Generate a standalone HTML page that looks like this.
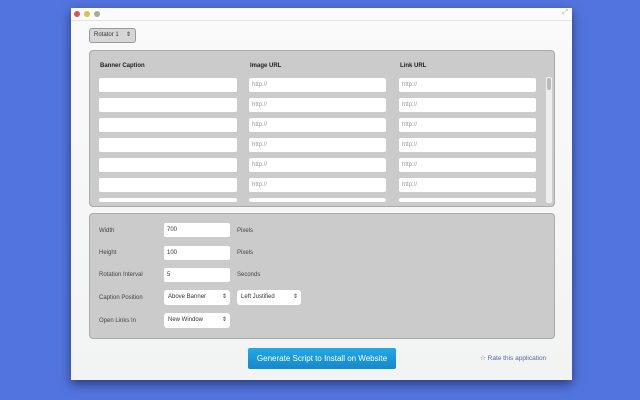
<html><head><style>
body{margin:0;width:640px;height:400px;background:#5274de;font-family:"Liberation Sans",sans-serif;position:relative;overflow:hidden}
.win{position:absolute;left:71px;top:8px;width:501px;height:372px;background:linear-gradient(#fafafa,#f2f3f3);box-shadow:0 4px 10px rgba(0,0,30,.5)}
.tb{position:absolute;left:0;top:0;width:501px;height:12px;border-bottom:1px solid #e4e4e4;background:#fbfbfb}
.dot{position:absolute;top:3px;width:6px;height:6px;border-radius:50%}
.a{position:absolute}
.panel{position:absolute;background:#cbcbcb;border:1px solid #aaa;border-radius:4px}
.in{position:absolute;background:#fff;height:14px;border-radius:2px;font-size:6px;color:#999;line-height:14px;text-indent:3px}
.lab{position:absolute;font-size:6px;color:#444}
.h{position:absolute;font-size:6px;font-weight:bold;color:#222}
.sel{position:absolute;background:#fff;height:15px;border-radius:3px;font-size:6px;color:#333;line-height:15px;text-indent:4px}
.sel:after{content:"⇕";position:absolute;right:3px;top:0;font-size:6px}
</style></head><body>
<div class="win">
<div class="tb"><div class="dot" style="left:3px;background:#e05050"></div><div class="dot" style="left:13px;background:#e0c040"></div><div class="dot" style="left:23px;background:#a0b090"></div><div class="a" style="right:4px;top:1px;font-size:7px;color:#aaa">⤢</div></div>
<div class="a" style="left:18px;top:20px;width:45px;height:13px;background:#d6d6d6;border:1px solid #999;border-radius:3px;font-size:6px;line-height:13px;text-indent:4px;color:#333">Rotator 1<span style="position:absolute;right:4px">⇕</span></div>
<div class="panel" style="left:18px;top:42px;width:464px;height:155px"></div>
<div class="panel" style="left:18px;top:205px;width:464px;height:124px"></div>
<div class="h" style="left:29px;top:55px">Banner Caption</div>
<div class="h" style="left:179px;top:55px">Image URL</div>
<div class="h" style="left:329px;top:55px">Link URL</div>
<div class="a" style="left:475px;top:69px;width:6px;height:126px;background:#eee;border-radius:2px"><div style="margin:1px;height:12px;background:#bbb;border-radius:2px"></div></div>
<div id="rows"></div>
<div class="lab" style="left:28px;top:220px">Width</div><div class="in" style="left:93px;top:215px;width:66px;color:#333">700</div><div class="lab" style="left:166px;top:220px">Pixels</div>
<div class="lab" style="left:28px;top:242px">Height</div><div class="in" style="left:93px;top:238px;width:66px;color:#333">100</div><div class="lab" style="left:166px;top:242px">Pixels</div>
<div class="lab" style="left:28px;top:264px">Rotation Interval</div><div class="in" style="left:93px;top:260px;width:66px;color:#333">5</div><div class="lab" style="left:166px;top:264px">Seconds</div>
<div class="lab" style="left:28px;top:287px">Caption Position</div><div class="sel" style="left:93px;top:282px;width:66px">Above Banner</div><div class="sel" style="left:166px;top:282px;width:64px">Left Justified</div>
<div class="lab" style="left:28px;top:310px">Open Links In</div><div class="sel" style="left:93px;top:305px;width:66px">New Window</div>
<div class="a" style="left:177px;top:340px;width:148px;height:21px;background:linear-gradient(#22a8e8,#1488cc);border-radius:2px;color:#fff;font-size:8px;line-height:21px;text-align:center">Generate Script to Install on Website</div>
<div class="a" style="left:409px;top:346px;font-size:6.5px;color:#5565a8">☆ Rate this application</div>
</div>
<script>
var h='';[70,90,110,130,150,170,190].forEach(function(y,i){var hh=i==6?4:14;
h+='<div class="in" style="left:28px;top:'+y+'px;width:138px;height:'+hh+'px"></div><div class="in" style="left:178px;top:'+y+'px;width:137px;height:'+hh+'px">'+(i<6?'http://':'')+'</div><div class="in" style="left:328px;top:'+y+'px;width:137px;height:'+hh+'px">'+(i<6?'http://':'')+'</div>';});
document.getElementById('rows').outerHTML=h;
</script>
</body></html>
